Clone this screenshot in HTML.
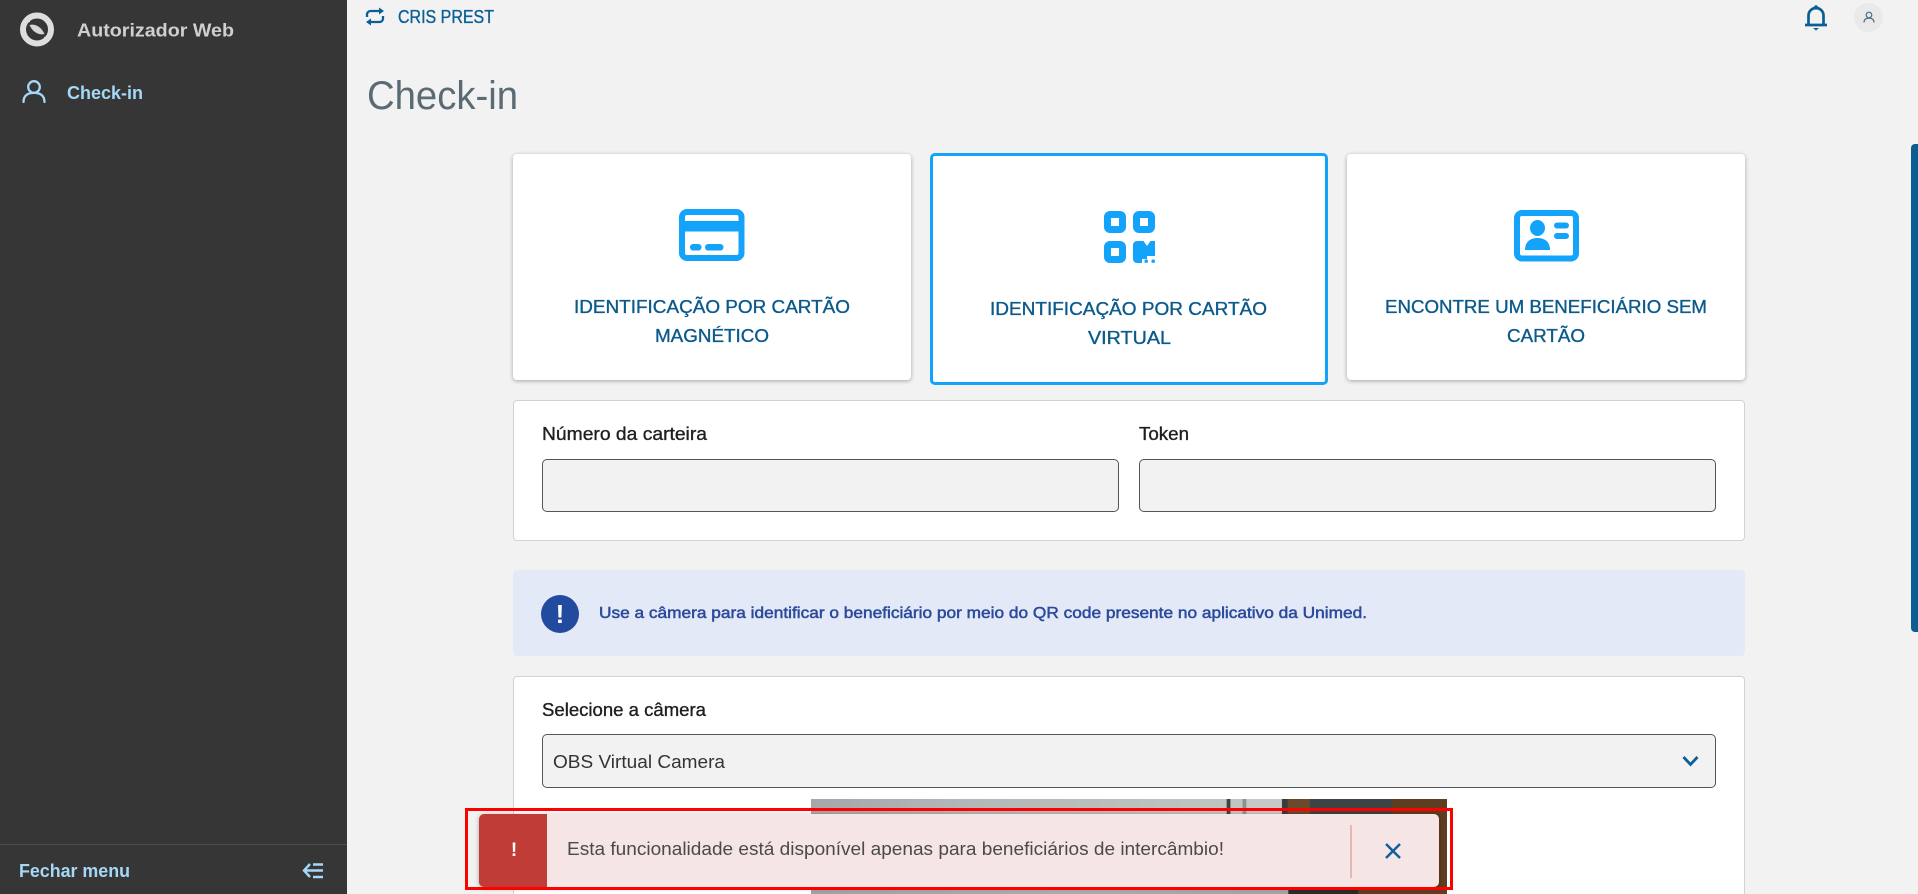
<!DOCTYPE html>
<html lang="pt-BR">
<head>
<meta charset="utf-8">
<title>Check-in</title>
<style>
html,body{margin:0;padding:0;width:1918px;height:894px;overflow:hidden;background:#f2f2f2;font-family:"Liberation Sans",sans-serif}
#root{position:relative;width:1918px;height:894px;overflow:hidden;background:#f2f2f2}
.b{position:absolute;box-sizing:border-box}
.card{background:#fff;border-radius:4px;box-shadow:0 1px 4px rgba(0,0,0,.32)}
.panel{background:#fff;border:1px solid #d2d2d2;border-radius:4px}
.input{background:#f2f2f2;border:1px solid #555;border-radius:5px}
svg.layer{position:absolute;left:0;top:0;width:1918px;height:894px}
svg text{font-family:"Liberation Sans",sans-serif;font-size:18px}
.semi{stroke-width:.35px;paint-order:stroke}
</style>
</head>
<body>
<div id="root">
<div class="b" style="left:0;top:0;width:347px;height:894px;background:#363636"></div>
<div class="b" style="left:0;top:844px;width:347px;height:1px;background:#465054"></div>

<div class="b card" style="left:513px;top:154px;width:398px;height:226px"></div>
<div class="b" style="left:930px;top:153px;width:398px;height:232px;background:#fff;border:3px solid #14a3fb;border-radius:5px"></div>
<div class="b card" style="left:1347px;top:154px;width:398px;height:226px"></div>

<div class="b panel" style="left:513px;top:400px;width:1232px;height:141px"></div>
<div class="b input" style="left:542px;top:459px;width:577px;height:53px"></div>
<div class="b input" style="left:1139px;top:459px;width:577px;height:53px"></div>

<div class="b" style="left:513px;top:570px;width:1232px;height:86px;background:#e3e9f6;border-radius:4px"></div>

<div class="b panel" style="left:513px;top:676px;width:1232px;height:240px"></div>
<div class="b input" style="left:542px;top:734px;width:1174px;height:54px"></div>

<div class="b" style="left:811px;top:799px;width:636px;height:95px;background:linear-gradient(90deg,#a5a7aa 0,#b3b8b8 25%,#bfc5c2 65.3%,#3f4346 65.4%,#3f4346 65.9%,#c0c6c4 66%,#c0c6c4 67.8%,#8d9190 67.9%,#8d9190 68.4%,#c5cac8 68.5%,#c5cac8 74%,#3a3c3c 74.1%,#3a3c3c 74.9%,#6a4a2c 75%,#6a4a2c 78.4%,#3c4446 78.5%,#3c4446 91.3%,#5e3d20 91.4%,#5e3d20 100%)"></div>
<div class="b" style="left:811px;top:889px;width:636px;height:5px;background:linear-gradient(90deg,#9fa3a3 0,#a9aeac 40%,#a0a5a3 75%,#2d2a28 75.1%,#2d2a28 86%,#5e3d20 86.1%,#5e3d20 100%)"></div>

<div class="b" style="left:479px;top:814px;width:960px;height:73px;background:#f6e5e5;border-radius:5px;box-shadow:0 1px 5px rgba(0,0,0,.3);overflow:hidden">
  <div class="b" style="left:0;top:0;width:68px;height:73px;background:#c03c36"></div>
  <div class="b" style="left:871px;top:11px;width:2px;height:53px;background:#e6b5b5"></div>
</div>
<div class="b" style="left:465px;top:808px;width:988px;height:82px;border:3px solid #ff0000"></div>

<div class="b" style="left:1911px;top:144px;width:7px;height:488px;background:#0b5c92;border-radius:4px 0 0 4px"></div>
<div class="b" style="left:1854px;top:3px;width:29px;height:29px;border-radius:50%;background:#e9e9e9"></div>

<svg class="layer" viewBox="0 0 1918 894" xmlns="http://www.w3.org/2000/svg">
  <!-- logo -->
  <circle cx="37" cy="29.500" r="14" fill="none" stroke="#dedede" stroke-width="6"/>
  <path d="M29 16 L23 24 L30 22 Z M45 43 L51 35 L44 37 Z" fill="#dedede"/>
  <path d="M29.500 25 C35 23.500 41 26.500 44.500 34 C39 35.500 33 32.500 29.500 25 Z" fill="#d6d6d6"/>
  <text x="77" y="36.500" textLength="157" lengthAdjust="spacingAndGlyphs" fill="#cfcfcf" font-weight="bold">Autorizador Web</text>

  <!-- sidebar item -->
  <circle cx="34" cy="87" r="5.800" fill="none" stroke="#a5d8f7" stroke-width="2.300"/>
  <path d="M23.500 102 C23.500 95.500 28 92.800 34 92.800 C40 92.800 44.500 95.500 44.500 102" fill="none" stroke="#a5d8f7" stroke-width="2.300" stroke-linecap="round"/>
  <text x="67" y="99" textLength="76" lengthAdjust="spacingAndGlyphs" fill="#a5d8f7" font-weight="bold">Check-in</text>

  <!-- footer -->
  <text x="19" y="877" textLength="111" lengthAdjust="spacingAndGlyphs" fill="#a5d8f7" font-weight="bold">Fechar menu</text>
  <path d="M310 864 L304 870.500 L310 877 M304 870.500 H323 M313 864.500 H323 M313 877 H323" fill="none" stroke="#a5d8f7" stroke-width="2.400"/>

  <!-- header -->
  <path d="M367 17 V14.500 A3.500 3.500 0 0 1 370.500 11 H380 M383 16 V19 A3.500 3.500 0 0 1 379.500 22 H370" fill="none" stroke="#0b5f94" stroke-width="2.300"/>
  <path d="M379 7.500 L384 11 L379 14.500 Z M371 18.500 L366 22 L371 25.500 Z" fill="#0b5f94"/>
  <text class="semi" stroke="#0b5f94" x="398" y="23" textLength="96" lengthAdjust="spacingAndGlyphs" fill="#0b5f94">CRIS PREST</text>
  <text x="367" y="109" textLength="151" lengthAdjust="spacingAndGlyphs" fill="#5a6b73" style="font-size:40px">Check-in</text>

  <path d="M1808.500 25 V15.500 A7.500 7.500 0 0 1 1823.500 15.500 V25" fill="none" stroke="#0b5f94" stroke-width="2.700"/>
  <path d="M1805 25 H1827" stroke="#0b5f94" stroke-width="2.700"/>
  <circle cx="1816" cy="7.500" r="2.200" fill="#0b5f94"/>
  <path d="M1813 28 H1819 L1816 30.500 Z" fill="#0b5f94"/>

  <circle cx="1869" cy="15" r="2.800" fill="none" stroke="#4a6a80" stroke-width="1.200"/>
  <path d="M1864 22.500 C1864 19.500 1866 18.200 1869 18.200 C1872 18.200 1874 19.500 1874 22.500" fill="none" stroke="#4a6a80" stroke-width="1.200"/>

  <!-- card 1 icon -->
  <rect x="682" y="212" width="59.500" height="46" rx="5" fill="none" stroke="#14a3fb" stroke-width="6"/>
  <rect x="681" y="221" width="61" height="10.500" fill="#14a3fb"/>
  <rect x="690" y="244" width="11.500" height="6.500" rx="3.200" fill="#14a3fb"/>
  <rect x="705" y="244" width="18.500" height="6.500" rx="3.200" fill="#14a3fb"/>

  <!-- card 2 icon -->
  <path fill="#14a3fb" fill-rule="evenodd" d="M1110 211h10a6 6 0 0 1 6 6v10a6 6 0 0 1-6 6h-10a6 6 0 0 1-6-6v-10a6 6 0 0 1 6-6zm1 7v8h8v-8z"/>
  <path fill="#14a3fb" fill-rule="evenodd" d="M1139 211h10a6 6 0 0 1 6 6v10a6 6 0 0 1-6 6h-10a6 6 0 0 1-6-6v-10a6 6 0 0 1 6-6zm1 7v8h8v-8z"/>
  <path fill="#14a3fb" fill-rule="evenodd" d="M1110 241h10a6 6 0 0 1 6 6v10a6 6 0 0 1-6 6h-10a6 6 0 0 1-6-6v-10a6 6 0 0 1 6-6zm1 7v8h8v-8z"/>
  <path fill="#14a3fb" d="M1137 241h6.500l3.500 5 3.500-5h4.500v15h-8v3h-5v4h-5a4 4 0 0 1-4-4v-14a4 4 0 0 1 4-4z"/>
  <rect x="1144.500" y="259.500" width="3.400" height="3.400" rx="1" fill="#14a3fb"/>
  <rect x="1151.500" y="259.500" width="3.400" height="3.400" rx="1" fill="#14a3fb"/>

  <!-- card 3 icon -->
  <rect x="1517" y="213" width="59" height="45.500" rx="5" fill="none" stroke="#14a3fb" stroke-width="6"/>
  <ellipse cx="1537.500" cy="228" rx="7.500" ry="8" fill="#14a3fb"/>
  <path d="M1525 250 C1525 242 1530 238 1537.500 238 C1545 238 1550 242 1550 250 Z" fill="#14a3fb"/>
  <rect x="1554" y="222.500" width="15" height="6" rx="3" fill="#14a3fb"/>
  <rect x="1554" y="233" width="15" height="6" rx="3" fill="#14a3fb"/>

  <!-- card labels -->
  <g fill="#0b5a8c" stroke="#0b5a8c">
    <text class="semi" x="574" y="313" textLength="276" lengthAdjust="spacingAndGlyphs">IDENTIFICAÇÃO POR CARTÃO</text>
    <text class="semi" x="655" y="342" textLength="114" lengthAdjust="spacingAndGlyphs">MAGNÉTICO</text>
    <text class="semi" x="990" y="315" textLength="277" lengthAdjust="spacingAndGlyphs">IDENTIFICAÇÃO POR CARTÃO</text>
    <text class="semi" x="1088" y="344" textLength="83" lengthAdjust="spacingAndGlyphs">VIRTUAL</text>
    <text class="semi" x="1385" y="313" textLength="322" lengthAdjust="spacingAndGlyphs">ENCONTRE UM BENEFICIÁRIO SEM</text>
    <text class="semi" x="1507" y="342" textLength="78" lengthAdjust="spacingAndGlyphs">CARTÃO</text>
  </g>

  <!-- form labels -->
  <text class="semi" stroke="#1f1f1f" x="542" y="440" textLength="165" lengthAdjust="spacingAndGlyphs" fill="#1f1f1f">Número da carteira</text>
  <text class="semi" stroke="#1f1f1f" x="1139" y="440" textLength="50" lengthAdjust="spacingAndGlyphs" fill="#1f1f1f">Token</text>

  <!-- info -->
  <circle cx="560" cy="614" r="19" fill="#224a9e"/>
  <text x="560" y="623" text-anchor="middle" fill="#fff" font-weight="bold" style="font-size:26px">!</text>
  <text stroke="#2b4a9c" stroke-width=".5" style="font-size:16px;paint-order:stroke" x="599" y="618" textLength="768" lengthAdjust="spacingAndGlyphs" fill="#2b4a9c">Use a câmera para identificar o beneficiário por meio do QR code presente no aplicativo da Unimed.</text>

  <!-- camera select -->
  <text class="semi" stroke="#1f1f1f" x="542" y="716" textLength="164" lengthAdjust="spacingAndGlyphs" fill="#1f1f1f">Selecione a câmera</text>
  <text x="553" y="768" textLength="172" lengthAdjust="spacingAndGlyphs" fill="#333">OBS Virtual Camera</text>
  <path d="M1683.500 757 L1690.500 764.500 L1697.500 757" fill="none" stroke="#0b5f94" stroke-width="2.800"/>

  <!-- toast -->
  <text x="514" y="856" text-anchor="middle" fill="#fff" font-weight="bold" style="font-size:19px">!</text>
  <text x="567" y="855" textLength="657" lengthAdjust="spacingAndGlyphs" fill="#4a4a4a">Esta funcionalidade está disponível apenas para beneficiários de intercâmbio!</text>
  <path d="M1386 844 L1400 858 M1400 844 L1386 858" fill="none" stroke="#0f609b" stroke-width="2.500"/>
</svg>
</div>
</body>
</html>
